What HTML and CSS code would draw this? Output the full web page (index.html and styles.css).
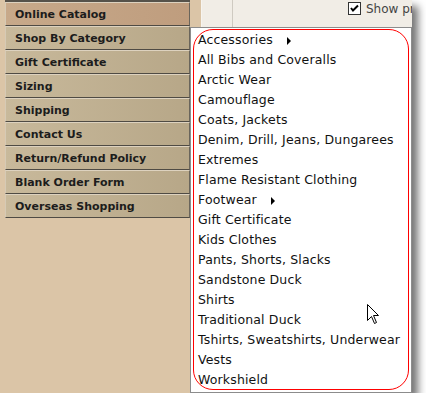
FILE: index.html
```html
<!DOCTYPE html>
<html lang="en">
<head>
    <meta charset="UTF-8">
    <title>Online Catalog</title>
    <link rel="stylesheet" href="styles.css">
</head>
<body>
    <div class="window">
        <div class="sidebar">
            <ul class="nav">
                <li class="nav-item active">Online Catalog</li>
                <li class="nav-item">Shop By Category</li>
                <li class="nav-item">Gift Certificate</li>
                <li class="nav-item">Sizing</li>
                <li class="nav-item">Shipping</li>
                <li class="nav-item">Contact Us</li>
                <li class="nav-item">Return/Refund Policy</li>
                <li class="nav-item">Blank Order Form</li>
                <li class="nav-item">Overseas Shopping</li>
            </ul>
        </div>

        <div class="main">
            <div class="toolbar">
                <div class="toolbar-gutter"></div>
                <label class="show-opt">
                    <span class="checkbox">
                        <svg width="11" height="11" viewBox="0 0 11 11">
                            <polyline points="2,5 4,7.5 9,2.5" fill="none" stroke="#000" stroke-width="2"/>
                        </svg>
                    </span>
                    Show prices
                </label>
            </div>
        </div>

        <!-- Shop By Category flyout -->
        <div class="dropdown">
            <ul class="dropdown-list">
                <li>Accessories<span class="sub-arrow"></span></li>
                <li>All Bibs and Coveralls</li>
                <li>Arctic Wear</li>
                <li>Camouflage</li>
                <li>Coats, Jackets</li>
                <li>Denim, Drill, Jeans, Dungarees</li>
                <li>Extremes</li>
                <li>Flame Resistant Clothing</li>
                <li>Footwear<span class="sub-arrow"></span></li>
                <li>Gift Certificate</li>
                <li>Kids Clothes</li>
                <li>Pants, Shorts, Slacks</li>
                <li>Sandstone Duck</li>
                <li>Shirts</li>
                <li>Traditional Duck</li>
                <li>Tshirts, Sweatshirts, Underwear</li>
                <li>Vests</li>
                <li>Workshield</li>
            </ul>
        </div>

        <svg class="cursor" width="13" height="21" viewBox="0 0 13 21">
            <path d="M0.5 0.5 L0.5 16.5 L4.5 12.5 L7.5 19.5 L9.5 18.5 L6.5 11.5 L11.5 11.5 Z" fill="#fff" stroke="#000" stroke-width="1"/>
        </svg>
    </div>
</body>
</html>
```

FILE: styles.css
```css
body {
    margin: 0;
    background: #fff;
}
.window {
    position: relative;
    display: flex;
    width: 412px;
    height: 393px;
    overflow: hidden;
    background: #dbc5a7;
    box-shadow: 6px 6px 8px rgba(0, 0, 0, 0.55);
}
.sidebar {
    flex: none;
    width: 201px;
    padding-left: 5px;
    box-sizing: border-box;
}
.nav {
    list-style: none;
    margin: 0;
    padding: 0;
    width: 185px;
    border-top: 2px solid #56524a;
}
.nav-item {
    height: 21px;
    padding-top: 1px;
    line-height: 22px;
    padding-left: 9px;
    border-top: 1px solid #ddd2bf;
    border-left: 1px solid #d6cab5;
    border-bottom: 1px solid #4f4b44;
    border-right: 1px solid #6a655b;
    background: linear-gradient(to right, #c8b99b, #b7a788);
    font-family: "DejaVu Sans", Verdana, sans-serif;
    font-size: 11px;
    font-weight: bold;
    color: #1c1c1c;
    white-space: nowrap;
}
.nav-item.active {
    background: linear-gradient(to right, #c7a98a, #bf9d7e);
}
.main {
    flex: 1;
    min-width: 0;
    overflow: hidden;
    background: #f1ede6;
    border-left: 1px solid #f7f4ef;
}
.toolbar {
    display: flex;
    height: 27px;
}
.toolbar-gutter {
    flex: none;
    width: 30px;
    border-right: 1px solid #cfcac1;
}
.show-opt {
    display: flex;
    align-items: flex-start;
    margin-left: 115px;
    padding-top: 2px;
    font-family: "DejaVu Sans", Tahoma, sans-serif;
    font-size: 12px;
    color: #444;
    white-space: nowrap;
}
.checkbox {
    display: block;
    flex: none;
    width: 11px;
    height: 11px;
    margin-right: 5px;
    border: 1px solid #333;
    background: #fff;
}
.checkbox svg {
    display: block;
}
.dropdown {
    position: absolute;
    left: 190px;
    top: 27px;
    width: 222px;
    height: 366px;
    box-sizing: border-box;
    background: #fff;
    border: 1px solid #8c8c8c;
    padding: 1px 2px 2px 2px;
}
.dropdown-list {
    list-style: none;
    margin: 0;
    padding: 0 0 0 4px;
    height: 100%;
    box-sizing: border-box;
    border: 1px solid #f00;
    border-radius: 20px;
    font-family: "DejaVu Sans", Tahoma, sans-serif;
    font-size: 12.5px;
    letter-spacing: 0.15px;
    color: #111;
}
.dropdown-list li {
    height: 20px;
    line-height: 20px;
    white-space: nowrap;
}
.sub-arrow {
    display: inline-block;
    margin-left: 14px;
    width: 0;
    height: 0;
    border-left: 4px solid #000;
    border-top: 4px solid transparent;
    border-bottom: 4px solid transparent;
    vertical-align: -1px;
}
.cursor {
    position: absolute;
    left: 367px;
    top: 304px;
}
```
